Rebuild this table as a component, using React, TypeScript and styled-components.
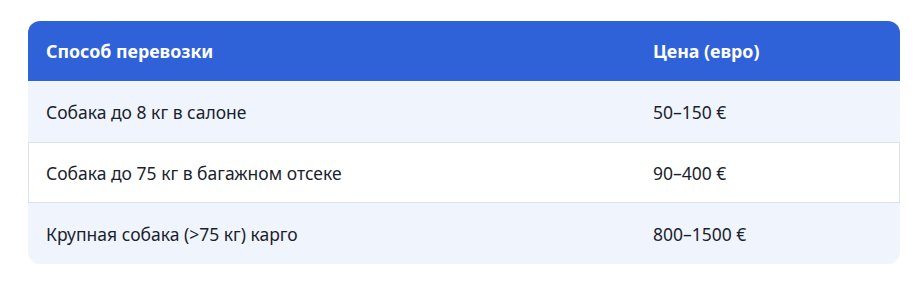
import React from 'react';
import styled, { createGlobalStyle } from 'styled-components';

const GlobalStyle = createGlobalStyle`
  body {
    margin: 0;
    background: #ffffff;
    font-family: "Noto Sans", "Open Sans", sans-serif;
  }
`;

const Wrapper = styled.div`
  padding: 21px 21px 0 28px;
`;

const Table = styled.table`
  width: 872px;
  border-collapse: separate;
  border-spacing: 0;
  border-radius: 12px;
  overflow: hidden;
  color: #1b1f2e;
`;

const HeadCell = styled.th<{ $width?: number }>`
  background: #2f62d8;
  color: #ffffff;
  font-weight: 700;
  font-size: 17.8px;
  text-align: left;
  height: 60px;
  padding: 0 18px;
  width: ${p => (p.$width ? `${p.$width}px` : 'auto')};
  box-sizing: border-box;
`;

const Row = styled.tr<{ $striped: boolean }>`
  background: ${p => (p.$striped ? '#f0f5fd' : '#ffffff')};
`;

const Cell = styled.td<{ $bordered: boolean; $first?: boolean; $last?: boolean }>`
  height: 61px;
  padding: 0 18px;
  padding-left: ${p => (p.$bordered && p.$first ? '17px' : '18px')};
  font-size: 17.5px;
  box-sizing: border-box;
  border-top: ${p => (p.$bordered ? '1px solid #dde3ec' : 'none')};
  border-bottom: ${p => (p.$bordered ? '1px solid #dde3ec' : 'none')};
  border-left: ${p => (p.$bordered && p.$first ? '1px solid #dde3ec' : 'none')};
  border-right: ${p => (p.$bordered && p.$last ? '1px solid #dde3ec' : 'none')};
`;

const rows = [
  { method: 'Собака до 8 кг в салоне', price: '50–150 €' },
  { method: 'Собака до 75 кг в багажном отсеке', price: '90–400 €' },
  { method: 'Крупная собака (>75 кг) карго', price: '800–1500 €' },
];

export default function App() {
  return (
    <>
      <GlobalStyle />
      <Wrapper>
        <Table>
          <thead>
            <tr>
              <HeadCell $width={607}>Способ перевозки</HeadCell>
              <HeadCell>Цена (евро)</HeadCell>
            </tr>
          </thead>
          <tbody>
            {rows.map((r, i) => {
              const bordered = i % 2 === 1;
              return (
                <Row key={r.method} $striped={!bordered}>
                  <Cell $bordered={bordered} $first>{r.method}</Cell>
                  <Cell $bordered={bordered} $last>{r.price}</Cell>
                </Row>
              );
            })}
          </tbody>
        </Table>
      </Wrapper>
    </>
  );
}
